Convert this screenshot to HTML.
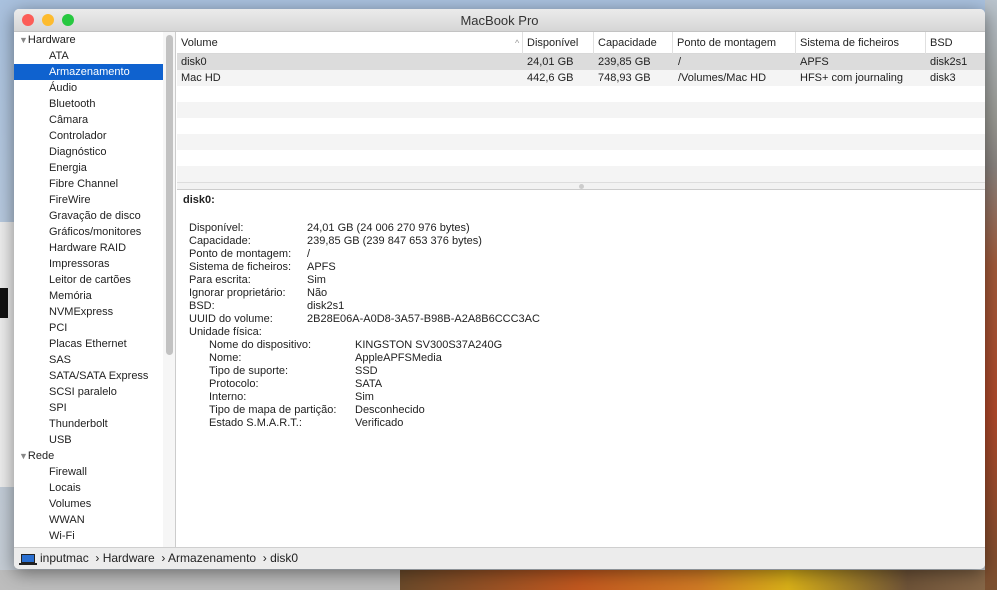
<!DOCTYPE html>
<html><head><meta charset="utf-8"><style>
*{margin:0;padding:0;box-sizing:border-box}
body{width:997px;height:590px;overflow:hidden;position:relative;font-family:"Liberation Sans",sans-serif;font-size:11px;color:#222;
background:linear-gradient(180deg,#a9c1de 0%,#b7c9de 40%,#c6cdd4 100%)}
.abs{position:absolute}
.win{left:14px;top:9px;width:971px;height:560px;background:#fff;border-radius:5px;overflow:hidden;box-shadow:0 4px 18px rgba(0,0,0,.45)}
.title{left:0;top:0;width:971px;height:23px;background:linear-gradient(#ebebeb,#d6d6d6);border-bottom:1px solid #c3c3c3;text-align:center;font-size:13px;line-height:23px;color:#333}
.dot{width:12px;height:12px;border-radius:6px;top:5px}
.side{left:0;top:23px;width:149px;height:515px;background:#fff}
.side div{height:16px;line-height:16px;white-space:nowrap}
.sb{left:149px;top:23px;width:13px;height:515px;background:#f6f6f6;border-right:1px solid #ccc}
.thumb{left:152px;top:26px;width:7px;height:320px;background:#c2c2c2;border-radius:4px}
.hdr{left:163px;top:23px;width:808px;height:22px;border-bottom:1px solid #d8d8d8;background:#fff}
.hdr span{position:absolute;top:0;line-height:22px;border-left:1px solid #e0e0e0;padding-left:4px;height:22px}
.row{left:163px;width:808px;height:16px;line-height:16px}
.row span{position:absolute}
.det{left:163px;top:182px;width:808px;height:356px}
.det div{position:absolute;line-height:13px;white-space:nowrap}
.status{left:0;top:538px;width:971px;height:22px;background:#ececec;border-top:1px solid #cfcfcf;line-height:21px;font-size:12px;color:#222}
</style></head><body>
<div class="abs" style="left:0;top:222px;width:14px;height:265px;background:#ececec"></div>
<div class="abs" style="left:0;top:288px;width:8px;height:30px;background:#111"></div>
<div class="abs" style="left:0;top:570px;width:400px;height:20px;background:#bdbdbd"></div>
<div class="abs" style="left:400px;top:570px;width:597px;height:20px;background:linear-gradient(90deg,#6b4a2a,#c2581f 30%,#d07a24 50%,#d9b018 65%,#6e5338 85%,#8a6a4a)"></div>
<div class="abs" style="left:985px;top:0;width:12px;height:590px;background:linear-gradient(180deg,#b9c3cc 0%,#9a9a94 20%,#8a8480 28%,#a25a3a 45%,#b0482a 70%,#7a5030 100%)"></div>
<div class="abs win">
 <div class="abs title">MacBook Pro</div>
 <div class="abs dot" style="left:8px;background:#fc5d57"></div>
 <div class="abs dot" style="left:28px;background:#fdbb2e"></div>
 <div class="abs dot" style="left:48px;background:#27c840"></div>
 <div class="abs side">
  <div style="padding-left:5px"><span style="color:#888;font-size:9px">▼</span>Hardware</div>
  <div style="padding-left:35px">ATA</div>
  <div style="padding-left:35px;background:#0f62cf;color:#fff">Armazenamento</div>
  <div style="padding-left:35px">Áudio</div><div style="padding-left:35px">Bluetooth</div>
  <div style="padding-left:35px">Câmara</div><div style="padding-left:35px">Controlador</div>
  <div style="padding-left:35px">Diagnóstico</div><div style="padding-left:35px">Energia</div>
  <div style="padding-left:35px">Fibre Channel</div><div style="padding-left:35px">FireWire</div>
  <div style="padding-left:35px">Gravação de disco</div><div style="padding-left:35px">Gráficos/monitores</div>
  <div style="padding-left:35px">Hardware RAID</div><div style="padding-left:35px">Impressoras</div>
  <div style="padding-left:35px">Leitor de cartões</div><div style="padding-left:35px">Memória</div>
  <div style="padding-left:35px">NVMExpress</div><div style="padding-left:35px">PCI</div>
  <div style="padding-left:35px">Placas Ethernet</div><div style="padding-left:35px">SAS</div>
  <div style="padding-left:35px">SATA/SATA Express</div><div style="padding-left:35px">SCSI paralelo</div>
  <div style="padding-left:35px">SPI</div><div style="padding-left:35px">Thunderbolt</div>
  <div style="padding-left:35px">USB</div>
  <div style="padding-left:5px"><span style="color:#888;font-size:9px">▼</span>Rede</div>
  <div style="padding-left:35px">Firewall</div><div style="padding-left:35px">Locais</div>
  <div style="padding-left:35px">Volumes</div><div style="padding-left:35px">WWAN</div>
  <div style="padding-left:35px">Wi-Fi</div>
 </div>
 <div class="abs sb"></div><div class="abs thumb"></div>
 <div class="abs hdr">
  <span style="left:0;border:0;padding-left:4px">Volume</span>
  <span style="left:334px;border:0;color:#999;font-size:9px">^</span>
  <span style="left:345px">Disponível</span>
  <span style="left:416px">Capacidade</span>
  <span style="left:495px">Ponto de montagem</span>
  <span style="left:618px">Sistema de ficheiros</span>
  <span style="left:748px">BSD</span>
 </div>
 <div class="abs row" style="top:45px;background:#dcdcdc"><span style="left:4px">disk0</span><span style="left:350px">24,01 GB</span><span style="left:421px">239,85 GB</span><span style="left:501px">/</span><span style="left:623px">APFS</span><span style="left:753px">disk2s1</span></div>
 <div class="abs row" style="top:61px;background:#f4f4f4"><span style="left:4px">Mac HD</span><span style="left:350px">442,6 GB</span><span style="left:421px">748,93 GB</span><span style="left:501px">/Volumes/Mac HD</span><span style="left:623px">HFS+ com journaling</span><span style="left:753px">disk3</span></div>
 <div class="abs row" style="top:77px"></div>
 <div class="abs row" style="top:93px;background:#f4f4f4"></div>
 <div class="abs row" style="top:109px"></div>
 <div class="abs row" style="top:125px;background:#f4f4f4"></div>
 <div class="abs row" style="top:141px"></div>
 <div class="abs row" style="top:157px;background:#f4f4f4"></div>
 <div class="abs" style="left:163px;top:173px;width:808px;height:8px;background:#f2f2f2;border-top:1px solid #ddd;border-bottom:1px solid #ccc"></div>
 <div class="abs" style="left:565px;top:175px;width:5px;height:5px;border-radius:3px;background:#ccc"></div>
 <div class="abs det">
  <div style="left:6px;top:3px;font-weight:bold">disk0:</div>
  <div style="left:12px;top:31px">Disponível:<br>Capacidade:<br>Ponto de montagem:<br>Sistema de ficheiros:<br>Para escrita:<br>Ignorar proprietário:<br>BSD:<br>UUID do volume:<br>Unidade física:</div>
  <div style="left:130px;top:31px">24,01 GB (24 006 270 976 bytes)<br>239,85 GB (239 847 653 376 bytes)<br>/<br>APFS<br>Sim<br>Não<br>disk2s1<br>2B28E06A-A0D8-3A57-B98B-A2A8B6CCC3AC</div>
  <div style="left:32px;top:148px">Nome do dispositivo:<br>Nome:<br>Tipo de suporte:<br>Protocolo:<br>Interno:<br>Tipo de mapa de partição:<br>Estado S.M.A.R.T.:</div>
  <div style="left:178px;top:148px">KINGSTON SV300S37A240G<br>AppleAPFSMedia<br>SSD<br>SATA<br>Sim<br>Desconhecido<br>Verificado</div>
 </div>
 <div class="abs status">
  <span class="abs" style="left:7px;top:6px;width:14px;height:9px;background:#2a6fd0;border:1px solid #222"></span>
  <span class="abs" style="left:5px;top:15px;width:18px;height:2px;background:#222"></span>
  <span class="abs" style="left:26px">inputmac &nbsp;› Hardware &nbsp;› Armazenamento &nbsp;› disk0</span>
 </div>
</div>
</body></html>
